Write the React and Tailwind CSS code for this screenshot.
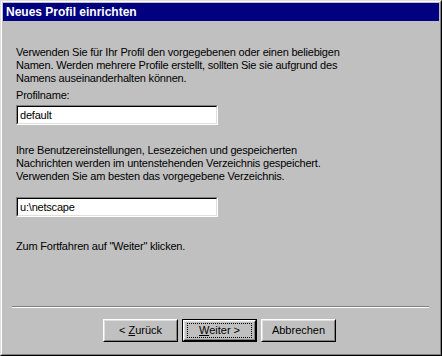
const Button = ({ children, isDefault }) => (
  <div className={isDefault ? "border border-black" : ""}>
    <div
      className={`flex items-center justify-center border border-t-white border-l-white border-r-black border-b-black bg-[#c0c0c0] ${
        isDefault ? "w-[73px] h-[21px]" : "w-[75px] h-[23px]"
      }`}
    >
      <div className="flex h-full w-full items-center justify-center border border-t-[#dfdfdf] border-l-[#dfdfdf] border-r-[#808080] border-b-[#808080]">
        {isDefault ? (
          <div className="flex h-[15px] w-[65px] items-center justify-center border border-dotted border-black">
            {children}
          </div>
        ) : (
          children
        )}
      </div>
    </div>
  </div>
);

const TextField = ({ value }) => (
  <div className="ml-[15px] w-[202px] h-[20px] border border-t-[#808080] border-l-[#808080] border-r-white border-b-white">
    <div className="h-full w-full border border-t-black border-l-black border-r-[#dfdfdf] border-b-[#dfdfdf] bg-white pl-[2px] flex items-center text-black">
      {value}
    </div>
  </div>
);

export default function App() {
  return (
    <div
      className="w-[442px] h-[356px] bg-[#c0c0c0] border border-t-[#dfdfdf] border-l-[#dfdfdf] border-r-black border-b-black text-[11px] leading-[13px] text-black"
      style={{ fontFamily: '"Liberation Sans", Arial, sans-serif' }}
    >
      <div className="h-full w-full border border-t-white border-l-white border-r-[#808080] border-b-[#808080] p-px flex flex-col">
        {/* title bar */}
        <div className="h-[18px] bg-[#000080] flex items-center pl-[3px] text-white font-bold text-[12px]">
          Neues Profil einrichten
        </div>

        <div className="flex flex-col mt-[25px] tracking-[-0.2px]">
          <p className="ml-[13px]">
            Verwenden Sie für Ihr Profil den vorgegebenen oder einen beliebigen
            <br />
            Namen. Werden mehrere Profile erstellt, sollten Sie sie aufgrund des
            <br />
            Namens auseinanderhalten können.
          </p>
          <p className="ml-[13px] mt-[4px]">Profilname:</p>
          <div className="mt-[3px] -ml-[2px]">
            <TextField value="default" />
          </div>

          <p className="ml-[13px] mt-[19px]">
            Ihre Benutzereinstellungen, Lesezeichen und gespeicherten
            <br />
            Nachrichten werden im untenstehenden Verzeichnis gespeichert.
            <br />
            Verwenden Sie am besten das vorgegebene Verzeichnis.
          </p>
          <div className="mt-[14px] -ml-[2px]">
            <TextField value="u:\netscape" />
          </div>

          <p className="ml-[13px] mt-[23px]">Zum Fortfahren auf "Weiter" klicken.</p>
        </div>

        <div className="flex-1" />

        {/* separator */}
        <div className="ml-[9px] w-[417px] border-t border-t-[#808080] border-b border-b-white" />

        <div className="flex items-center gap-[4px] ml-[100px] mt-[11px] mb-[11px]">
          <Button>
            <span>
              &lt; <span className="underline">Z</span>urück
            </span>
          </Button>
          <Button isDefault>
            <span>
              <span className="underline">W</span>eiter &gt;
            </span>
          </Button>
          <Button>Abbrechen</Button>
        </div>
      </div>
    </div>
  );
}
